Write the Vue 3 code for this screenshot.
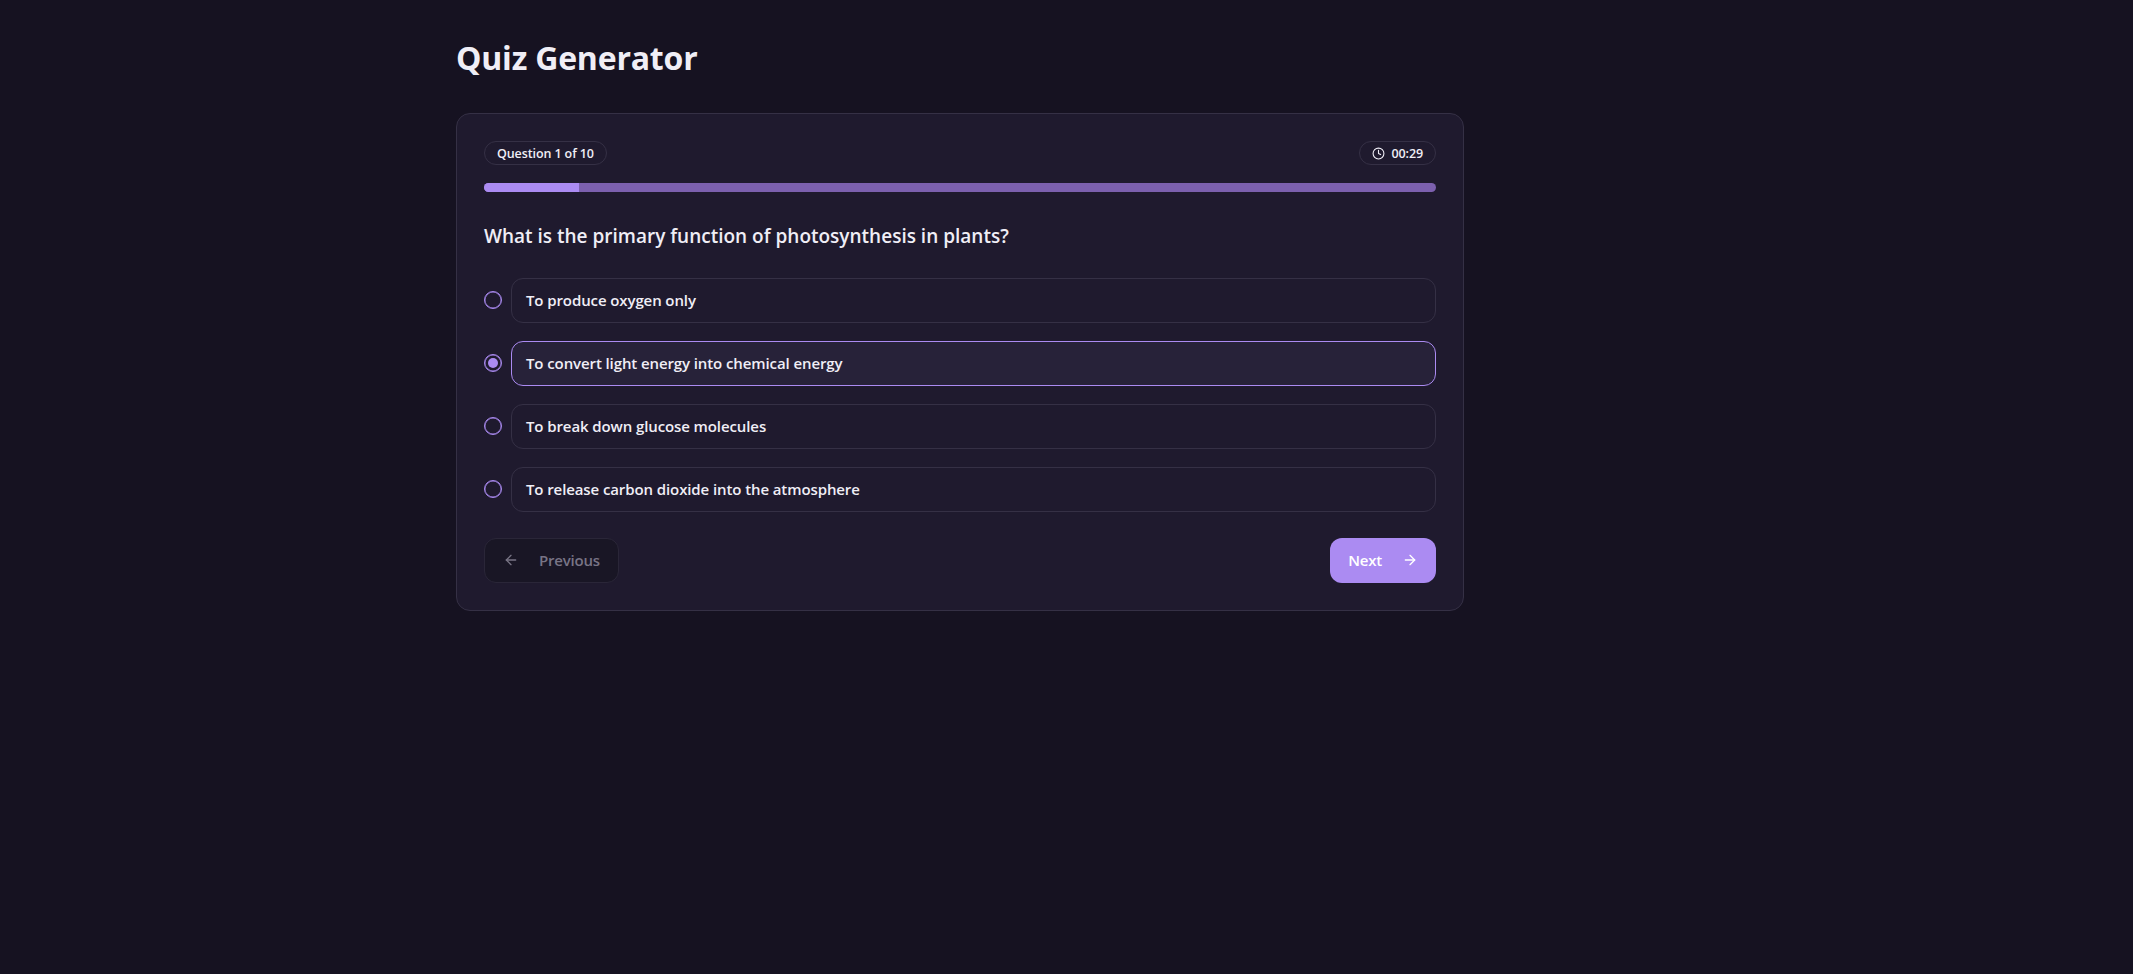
<script setup>
import { ref } from 'vue'

const options = [
  'To produce oxygen only',
  'To convert light energy into chemical energy',
  'To break down glucose molecules',
  'To release carbon dioxide into the atmosphere',
]
const selected = ref(1)
const total = 10
const current = ref(1)
</script>

<template>
  <div class="page">
    <h1 class="title">Quiz Generator</h1>

    <div class="card">
      <div class="top-row">
        <span class="pill">Question {{ current }} of {{ total }}</span>
        <span class="pill pill-time">
          <svg class="clock" viewBox="0 0 24 24" fill="none" stroke="currentColor" stroke-width="2" stroke-linecap="round" stroke-linejoin="round">
            <circle cx="12" cy="12" r="10" />
            <polyline points="12 6 12 12 16 14" />
          </svg>
          00:29
        </span>
      </div>

      <div class="progress">
        <div class="progress-fill" :style="{ width: (current / total) * 100 + '%' }"></div>
      </div>

      <h2 class="question">What is the primary function of photosynthesis in plants?</h2>

      <div class="options">
        <div v-for="(opt, i) in options" :key="opt" class="option" @click="selected = i">
          <span class="radio" :class="{ checked: selected === i }"></span>
          <div class="option-box" :class="{ active: selected === i }">{{ opt }}</div>
        </div>
      </div>

      <div class="nav">
        <button class="btn btn-prev" disabled>
          <svg class="arrow" viewBox="0 0 24 24" fill="none" stroke="currentColor" stroke-width="2" stroke-linecap="round" stroke-linejoin="round">
            <path d="m12 19-7-7 7-7" />
            <path d="M19 12H5" />
          </svg>
          Previous
        </button>
        <button class="btn btn-next">
          Next
          <svg class="arrow" viewBox="0 0 24 24" fill="none" stroke="currentColor" stroke-width="2" stroke-linecap="round" stroke-linejoin="round">
            <path d="M5 12h14" />
            <path d="m12 5 7 7-7 7" />
          </svg>
        </button>
      </div>
    </div>
  </div>
</template>

<style>
html,
body {
  background: #161221;
}
</style>

<style scoped>
.page {
  width: 1008px;
  min-height: 974px;
  margin-left: 456px;
  padding-top: 33px;
  box-sizing: border-box;
  font-family: 'Open Sans', 'Noto Sans', sans-serif;
  color: #f0eef6;
}
.title {
  margin: 0 0 31px;
  font-size: 32px;
  line-height: 49px;
  font-weight: 700;
  letter-spacing: -0.2px;
}
.card {
  box-sizing: border-box;
  height: 498px;
  padding: 27px 27px;
  background: #1f1a2e;
  border: 1px solid #353045;
  border-radius: 14px;
}
.top-row {
  display: flex;
  justify-content: space-between;
  align-items: center;
}
.pill {
  display: inline-flex;
  align-items: center;
  height: 24px;
  box-sizing: border-box;
  padding: 0 12px;
  border: 1px solid #353045;
  border-radius: 12px;
  font-size: 12.5px;
  font-weight: 600;
  letter-spacing: -0.1px;
}
.pill-time {
  gap: 6px;
}
.clock {
  width: 13px;
  height: 13px;
}
.progress {
  height: 9px;
  margin-top: 18px;
  background: #7c60ae;
  border-radius: 5px;
  overflow: hidden;
}
.progress-fill {
  height: 100%;
  background: #ab8bf2;
}
.question {
  margin: 31px 0 29px;
  font-size: 19px;
  line-height: 26px;
  font-weight: 600;
}
.options {
  display: flex;
  flex-direction: column;
  gap: 18px;
}
.option {
  display: flex;
  align-items: center;
  gap: 9px;
  cursor: pointer;
}
.radio {
  flex: none;
  box-sizing: border-box;
  width: 18px;
  height: 18px;
  border: 1px solid #ab8bf2;
  box-shadow: inset 0 0 0 0.4px #ab8bf2;
  border-radius: 50%;
  display: flex;
  align-items: center;
  justify-content: center;
}
.radio.checked::after {
  content: '';
  width: 10px;
  height: 10px;
  border-radius: 50%;
  background: #ab8bf2;
}
.option-box {
  flex: 1;
  box-sizing: border-box;
  height: 44.9px;
  padding: 0 14px;
  display: flex;
  align-items: center;
  border: 1px solid #353045;
  border-radius: 12px;
  font-size: 15px;
  font-weight: 600;
  letter-spacing: -0.1px;
}
.option-box.active {
  background: #272239;
  border-color: #ab8bf2;
}
.nav {
  display: flex;
  justify-content: space-between;
  margin-top: 26.4px;
}
.btn {
  display: inline-flex;
  align-items: center;
  gap: 20px;
  height: 45px;
  padding: 0 18px;
  border-radius: 12px;
  font-family: inherit;
  font-size: 15px;
  font-weight: 600;
  letter-spacing: -0.2px;
}
.arrow {
  width: 16px;
  height: 16px;
}
.btn-prev {
  background: #191625;
  border: 1px solid #2a2638;
  color: #787485;
}
.btn-next {
  background: #ab8bf2;
  border: none;
  color: #fff;
}
</style>
